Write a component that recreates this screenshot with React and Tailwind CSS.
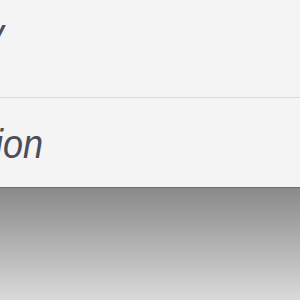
export default function App() {
  return (
    <div className="flex h-[300px] w-[300px] flex-col overflow-hidden bg-white">
      <div className="flex h-[187px] flex-col bg-[#f4f4f5]">
        <div className="flex h-[98px] border-b border-[#dadada]">
          <div className="flex w-[4px] shrink-0 justify-end whitespace-nowrap pt-[13px]">
            <span className="origin-top scale-y-[1.12] text-[36px] italic leading-none text-[#4a4e5a] [font-family:'Liberation_Sans',Arial,sans-serif]">
              Privacy
            </span>
          </div>
        </div>
        <div className="flex h-[89px]">
          <div className="flex w-[43px] shrink-0 justify-end whitespace-nowrap pt-[26px]">
            <span className="origin-top scale-y-[1.12] text-[36px] italic leading-none text-[#4a4e5a] [font-family:'Liberation_Sans',Arial,sans-serif]">
              Description
            </span>
          </div>
        </div>
      </div>
      <div className="h-[113px] border-t border-[#6e6e6e] bg-gradient-to-b from-[#8a8a8a] to-[#dadada]" />
    </div>
  );
}
